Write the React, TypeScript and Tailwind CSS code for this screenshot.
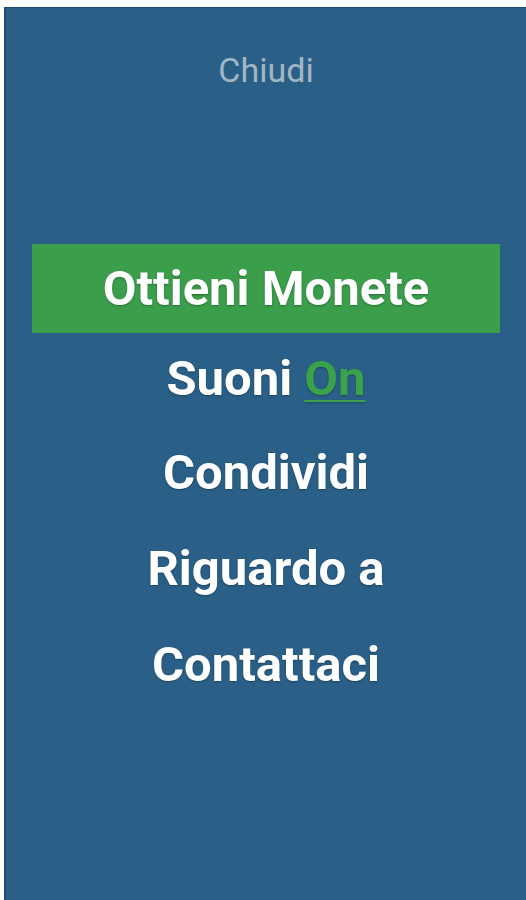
export default function App() {
  const items = ["Condividi", "Riguardo a", "Contattaci"];

  return (
    <div className="h-[900px] w-[526px] overflow-hidden bg-white pl-[4px] pt-[7px]">
      <div
        className="flex h-full flex-col items-center border-l-2 border-t border-[#1d4d74] bg-[#2a6087] text-white"
        style={{ fontFamily: "Roboto, 'Liberation Sans', sans-serif" }}
      >
        <button className="mt-[42px] text-[34px] leading-[40px] text-[#a3b6c3]">Chiudi</button>

        {/* menu */}
        <nav className="mt-[154px] flex w-full flex-col items-center pl-[26px] pr-[26px] font-bold [text-shadow:0_1px_2px_rgba(0,0,0,0.3)]">
          <div className="flex h-[89px] w-full items-center justify-center bg-[#3a9e4b] text-[49px]">
            Ottieni Monete
          </div>
          <div className="flex h-[92px] items-center text-[49px]">
            Suoni&nbsp;
            <span className="text-[#3aa24b] underline decoration-2 underline-offset-[5px]">On</span>
          </div>
          {items.map((label) => (
            <div key={label} className="flex h-[96px] items-center text-[49px]">
              {label}
            </div>
          ))}
        </nav>
      </div>
    </div>
  );
}
